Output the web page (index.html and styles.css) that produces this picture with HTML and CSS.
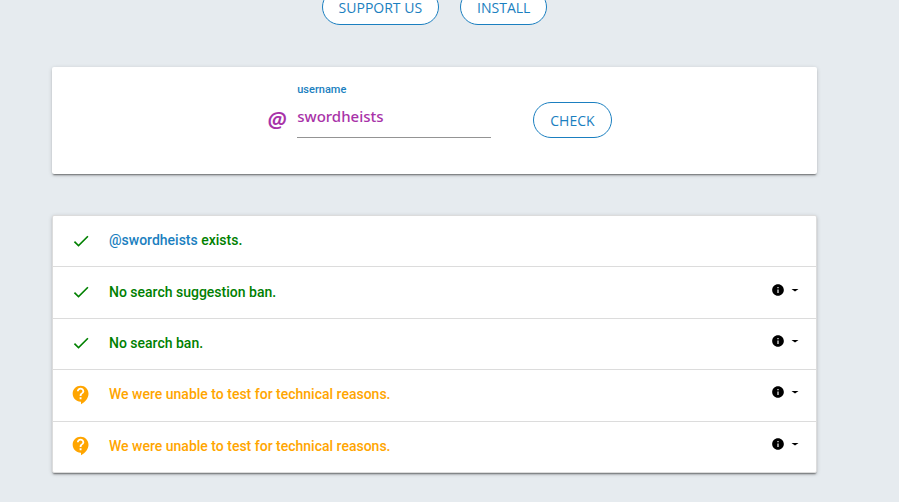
FILE: index.html
```html
<!DOCTYPE html>
<html lang="en">
<head>
    <meta charset="UTF-8">
    <meta name="viewport" content="width=device-width, initial-scale=1.0">
    <title>Shadowban Test</title>
    <link rel="stylesheet" href="styles.css">
</head>
<body>
    <svg class="sprite" aria-hidden="true">
        <symbol id="icon-check" viewBox="0 0 24 24">
            <path d="M9 16.17L4.83 12l-1.42 1.41L9 19 21 7l-1.41-1.41z"/>
        </symbol>
        <symbol id="icon-unknown" viewBox="0 0 24 24">
            <path d="M11.5 1C6.3 1 2 5.2 2 10.5S6.3 20 11.5 20h.5v3c5.4-2.6 9-7.4 9-12.5C21 5.2 16.8 1 11.5 1zm1.1 16h-2.2v-2.2h2.2V17zm0-3.9h-2.2c0-3.6 3.3-3.3 3.3-5.5 0-1.2-1-2.2-2.2-2.2s-2.2 1-2.2 2.2H7.1c0-2.4 2-4.4 4.4-4.4s4.4 2 4.4 4.4c0 2.7-3.3 3-3.3 5.5z"/>
        </symbol>
        <symbol id="icon-info" viewBox="0 0 24 24">
            <path d="M12 2C6.48 2 2 6.48 2 12s4.48 10 10 10 10-4.48 10-10S17.52 2 12 2zm1 15h-2v-6h2v6zm0-8h-2V7h2v2z"/>
        </symbol>
        <symbol id="icon-arrow" viewBox="0 0 24 24">
            <path d="M5 10l7 5 7-5z"/>
        </symbol>
    </svg>

    <div class="container">
        <header class="actions">
            <button type="button" class="btn">SUPPORT US</button>
            <button type="button" class="btn">INSTALL</button>
        </header>

        <form class="card search">
            <span class="at">@</span>
            <div class="field">
                <label for="username">username</label>
                <input type="text" id="username" value="swordheists" spellcheck="false" autocomplete="off">
            </div>
            <button type="button" class="btn">CHECK</button>
        </form>

        <ul class="card results">
            <li class="result ok">
                <svg class="status"><use href="#icon-check"/></svg>
                <span class="text"><a href="#swordheists">@swordheists</a> exists.</span>
            </li>
            <li class="result ok">
                <svg class="status"><use href="#icon-check"/></svg>
                <span class="text">No search suggestion ban.</span>
                <button type="button" class="more" aria-label="Details">
                    <svg class="info"><use href="#icon-info"/></svg>
                    <svg class="arrow"><use href="#icon-arrow"/></svg>
                </button>
            </li>
            <li class="result ok">
                <svg class="status"><use href="#icon-check"/></svg>
                <span class="text">No search ban.</span>
                <button type="button" class="more" aria-label="Details">
                    <svg class="info"><use href="#icon-info"/></svg>
                    <svg class="arrow"><use href="#icon-arrow"/></svg>
                </button>
            </li>
            <li class="result warn">
                <svg class="status"><use href="#icon-unknown"/></svg>
                <span class="text">We were unable to test for technical reasons.</span>
                <button type="button" class="more" aria-label="Details">
                    <svg class="info"><use href="#icon-info"/></svg>
                    <svg class="arrow"><use href="#icon-arrow"/></svg>
                </button>
            </li>
            <li class="result warn">
                <svg class="status"><use href="#icon-unknown"/></svg>
                <span class="text">We were unable to test for technical reasons.</span>
                <button type="button" class="more" aria-label="Details">
                    <svg class="info"><use href="#icon-info"/></svg>
                    <svg class="arrow"><use href="#icon-arrow"/></svg>
                </button>
            </li>
        </ul>
    </div>
</body>
</html>
```
FILE: styles.css
```css
* {
    margin: 0;
    padding: 0;
    box-sizing: border-box;
}

body {
    font-family: Roboto, sans-serif;
    font-size: 14px;
    background: #e6ebef;
    overflow: hidden;
}

.sprite {
    display: none;
}

.container {
    padding: 0 82px 16px 52px;
}

.actions {
    display: flex;
    justify-content: center;
    gap: 21px;
    margin-top: -11px;
    margin-bottom: 42px;
}

.btn {
    height: 36px;
    padding: 0 16px;
    border: 1px solid #1b7fc0;
    border-radius: 18px;
    background: #fff;
    color: #1b7fc0;
    font-family: "Open Sans", "Noto Sans", sans-serif;
    font-size: 14px;
    cursor: pointer;
}

.card {
    background: #fff;
    border-radius: 2px;
    box-shadow: 0 2px 2px -1px rgba(0, 0, 0, 0.5), 0 1px 4px rgba(0, 0, 0, 0.16);
}

.search {
    display: flex;
    justify-content: center;
    align-items: flex-start;
    padding: 16px 0 36px 10px;
    margin-bottom: 41px;
}

.at {
    margin: 22px 11px 0 0;
    color: #a832a8;
    font-family: "Noto Sans", sans-serif;
    font-size: 22px;
    font-style: italic;
    font-weight: 600;
    line-height: 28px;
}

.field {
    width: 194px;
    margin-right: 42px;
}

.field label {
    display: block;
    color: #1b7fc0;
    font-size: 11px;
    font-weight: 500;
    line-height: 14px;
}

.field input {
    display: block;
    width: 100%;
    height: 41px;
    padding-bottom: 2px;
    border: 0;
    border-bottom: 1px solid #949494;
    outline: 0;
    background: none;
    color: #a832a8;
    font-family: "Noto Sans", sans-serif;
    font-size: 15px;
    font-weight: 500;
}

.search .btn {
    margin-top: 19px;
}

.results {
    display: grid;
    min-height: 258px;
    border: 1px solid #dcdcdc;
    list-style: none;
}

.result {
    display: flex;
    align-items: center;
    padding: 0 15px 1px 18px;
    font-weight: 500;
}

.result + .result {
    border-top: 1px solid #dcdcdc;
}

.ok {
    color: #008000;
}

.warn {
    color: #ffa500;
}

.status {
    width: 20px;
    height: 20px;
    margin-right: 18px;
    fill: currentColor;
}

.text {
    flex: 1;
    padding-bottom: 1px;
}

.text a {
    color: #1b7fc0;
    text-decoration: none;
}

.more {
    display: flex;
    align-items: center;
    gap: 4px;
    padding-bottom: 5px;
    border: 0;
    background: none;
    cursor: pointer;
}

.info {
    width: 14px;
    height: 14px;
}

.arrow {
    width: 12px;
    height: 12px;
}
```
